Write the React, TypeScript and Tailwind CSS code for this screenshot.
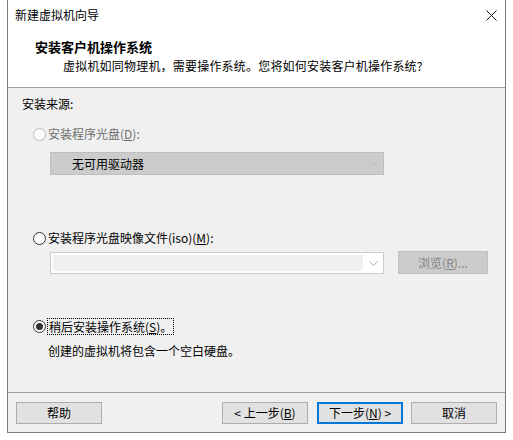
import React from "react";

const font = "font-['Noto_Sans_CJK_SC','Noto_Sans',sans-serif]";

function Radio({ checked, disabled }: { checked?: boolean; disabled?: boolean }) {
  return (
    <span
      className={`flex h-[13px] w-[13px] shrink-0 items-center justify-center rounded-full border ${
        disabled ? "border-[#bcbcbc] bg-[#fcfcfc]" : "border-[#333333] bg-white"
      }`}
    >
      {checked ? <span className="h-[7px] w-[7px] rounded-full bg-[#333333]" /> : null}
    </span>
  );
}

function Chevron({ color }: { color: string }) {
  return (
    <svg width="9" height="5" viewBox="0 0 9 5" className="shrink-0">
      <polyline points="0.5,0.5 4.5,4.5 8.5,0.5" fill="none" stroke={color} strokeWidth="1" />
    </svg>
  );
}

function Btn({ children, primary, className = "" }: { children: React.ReactNode; primary?: boolean; className?: string }) {
  return (
    <div
      className={`flex h-[22px] w-[86px] items-center justify-center bg-[#e1e1e1] text-[12px] leading-[16px] text-black ${
        primary ? "border-2 border-[#0078d7]" : "border border-[#adadad]"
      } ${className}`}
    >
      {children}
    </div>
  );
}

export default function App() {
  return (
    <div className={`h-[440px] w-[513px] bg-white pl-[7px] ${font}`}>
      <div className="flex h-[433px] w-[499px] flex-col border-x border-b border-[#7a7a7a]">
        {/* title bar */}
        <div className="flex h-[30px] shrink-0 items-center justify-between bg-white pl-[7px] pr-[8px]">
          <span className="text-[12px] leading-[16px] text-black">新建虚拟机向导</span>
          <svg width="11" height="11" viewBox="0 0 11 11">
            <path d="M0.5 0.5 L10.5 10.5 M10.5 0.5 L0.5 10.5" stroke="#111" strokeWidth="1" />
          </svg>
        </div>
        {/* header */}
        <div className="flex h-[58px] shrink-0 flex-col border-b border-[#a0a0a0] bg-white pt-[8px]">
          <div className="pl-[27px] text-[13px] font-bold leading-[18px] text-black">安装客户机操作系统</div>
          <div className="mt-[1px] pl-[55px] text-[12px] leading-[18px] tracking-[0.2px] text-black">
            虚拟机如同物理机，需要操作系统。您将如何安装客户机操作系统?
          </div>
        </div>
        {/* content */}
        <div className="flex h-[305px] shrink-0 flex-col border-b border-[#a0a0a0] bg-[#f0f0f0] text-[12px] text-black">
          <div className="mt-[8px] pl-[14px] leading-[16px]">安装来源:</div>

          <div className="mt-[13px] flex h-[18px] items-center pl-[25px]">
            <Radio disabled />
            <span className="ml-[2px] leading-[16px] text-[#6d6d6d]">
              安装程序光盘(<span className="underline">D</span>):
            </span>
          </div>

          <div className="ml-[42px] mt-[9px] flex h-[23px] w-[334px] items-center justify-between border border-[#bfbfbf] bg-[#cccccc] pl-[21px] pr-[5px]">
            <span className="leading-[16px]">无可用驱动器</span>
            <Chevron color="#b4b4b4" />
          </div>

          <div className="mt-[54px] flex h-[18px] items-center pl-[25px]">
            <Radio />
            <span className="ml-[2px] leading-[16px]">
              安装程序光盘映像文件(iso)(<span className="underline">M</span>):
            </span>
          </div>

          <div className="ml-[42px] mt-[4px] flex h-[23px] items-end">
            <div className="flex h-[22px] w-[334px] items-center border border-[#cccccc] bg-white pl-[2px] pr-[5px]">
              <div className="h-[16px] w-[310px] bg-[#f0f0f0]" />
              <div className="flex-1" />
              <Chevron color="#a8a8a8" />
            </div>
            <div className="ml-[14px] flex h-[23px] w-[90px] items-center justify-center border border-[#bfbfbf] bg-[#cccccc] leading-[16px] text-[#838383]">
              浏览(<span className="underline">R</span>)...
            </div>
          </div>

          <div className="mt-[43px] flex h-[18px] items-center pl-[25px]">
            <Radio checked />
            <span className="ml-[1px] border border-dotted border-black px-[1px] leading-[15px]">
              稍后安装操作系统(<span className="underline">S</span>)。
            </span>
          </div>

          <div className="mt-[8px] pl-[40px] leading-[16px]">创建的虚拟机将包含一个空白硬盘。</div>
        </div>
        {/* footer */}
        <div className="flex flex-1 items-start bg-[#f0f0f0] pt-[9px]">
          <Btn className="ml-[8px]">帮助</Btn>
          <div className="flex-1" />
          <Btn>&lt; 上一步(<span className="underline">B</span>)</Btn>
          <Btn primary className="ml-[9px]">
            下一步(<span className="underline">N</span>) &gt;
          </Btn>
          <Btn className="ml-[8px] mr-[8px]">取消</Btn>
        </div>
      </div>
    </div>
  );
}
